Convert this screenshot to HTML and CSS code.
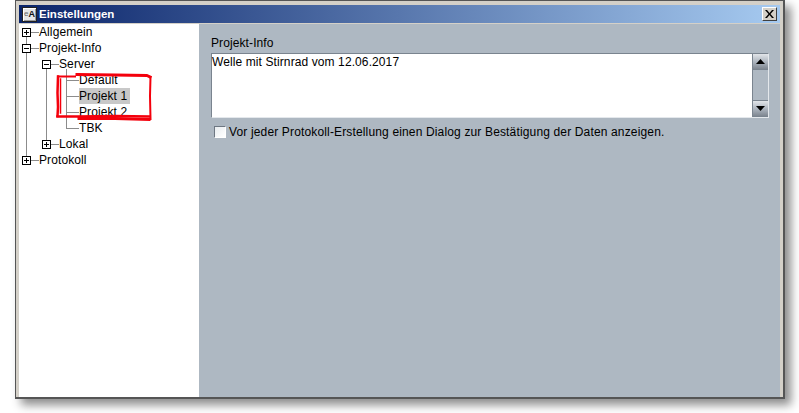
FILE: index.html
```html
<!DOCTYPE html>
<html lang="de">
<head>
<meta charset="utf-8">
<title>Einstellungen</title>
<link rel="stylesheet" href="styles.css">
</head>
<body>
<div class="window">
  <div class="titlebar">
    <div class="app-icon"><span class="icon-e">e</span><span>A</span></div>
    <div class="title">Einstellungen</div>
    <button class="close" aria-label="Schließen">
      <svg width="9" height="8" viewBox="0 0 9 8"><path d="M0 0h2l2.500 3 2.500-3h2l-3.500 4 3.500 4h-2l-2.500-3-2.500 3h-2l3.500-4z" fill="#000"/></svg>
    </button>
  </div>
  <div class="content">
    <aside class="tree">
      <svg class="tree-lines" width="180" height="160" viewBox="0 0 180 160">
        <g stroke="#8c8c8c" stroke-width="1" fill="none" shape-rendering="crispEdges">
          <path d="M7.500 13V136.500M27.500 45V120.500M47.500 45V104.500"/>
          <path d="M12 8.500H20M12 24.500H20M32 40.500H40M47 56.500H60M47 72.500H60M47 88.500H60M47 104.500H60M32 120.500H40M12 136.500H20"/>
        </g>
        <g stroke="#000" fill="#fff" shape-rendering="crispEdges">
          <rect x="3.500" y="4.500" width="8" height="8"/>
          <rect x="3.500" y="20.500" width="8" height="8"/>
          <rect x="23.500" y="36.500" width="8" height="8"/>
          <rect x="23.500" y="116.500" width="8" height="8"/>
          <rect x="3.500" y="132.500" width="8" height="8"/>
          <path d="M5 8.500H10M7.500 6V11M5 24.500H10M25 40.500H30M25 120.500H30M27.500 118V123M5 136.500H10M7.500 134V139"/>
        </g>
      </svg>
      <div class="node lvl1">Allgemein</div>
      <div class="node lvl1">Projekt-Info</div>
      <div class="node lvl2">Server</div>
      <div class="node lvl3">Default</div>
      <div class="node lvl3"><span class="selected">Projekt 1</span></div>
      <div class="node lvl3">Projekt 2</div>
      <div class="node lvl3">TBK</div>
      <div class="node lvl2">Lokal</div>
      <div class="node lvl1">Protokoll</div>
    </aside>
    <main class="panel">
      <div class="label">Projekt-Info</div>
      <div class="textbox">
        <div class="text">Welle mit Stirnrad vom 12.06.2017</div>
        <div class="scrollbar">
          <div class="arrow"><svg width="9" height="5" viewBox="0 0 9 5"><path d="M4.500 0L9 5H0z" fill="#000"/></svg></div>
          <div class="track"></div>
          <div class="arrow"><svg width="9" height="5" viewBox="0 0 9 5"><path d="M0 0H9L4.500 5z" fill="#000"/></svg></div>
        </div>
      </div>
      <div class="check-row">
        <span class="checkbox"></span>
        <span>Vor jeder Protokoll-Erstellung einen Dialog zur Bestätigung der Daten anzeigen.</span>
      </div>
    </main>
  </div>
</div>
<svg class="scribble" width="110" height="60" viewBox="0 0 110 60">
  <g fill="none" stroke="#f4000c" stroke-linecap="square" stroke-linejoin="round">
    <path stroke-width="2" d="M3 5.500H20"/>
    <path stroke-width="3" d="M22 3.500L60 4L92 4.500L95 6"/>
    <path stroke-width="2.500" d="M3 5.500L2.500 22L3 36L2.500 45"/>
    <path stroke-width="1.500" d="M5.500 8V42"/>
    <path stroke-width="2" d="M95.500 6L95 25L95.500 48"/>
    <path stroke-width="2.500" d="M2.500 45.500L22 45.500L60 45L94 45.500"/>
    <path stroke-width="3" d="M24 47.500L60 47.500L94 48.500"/>
  </g>
</svg>
</body>
</html>
```
FILE: styles.css
```css
* { box-sizing: border-box; }
html, body { margin: 0; padding: 0; background: #fff; }
body {
  position: relative;
  width: 799px;
  height: 413px;
  overflow: hidden;
  font-family: "Liberation Sans", Arial, sans-serif;
  font-size: 12px;
  letter-spacing: 0.1px;
  color: #000;
}
.window {
  margin-left: 15px;
  width: 770px;
  height: 399px;
  padding: 4px 3px 0 3px;
  display: flex;
  flex-direction: column;
  background: #d4d0c8;
  border: 1px solid #555;
  border-width: 1px 2px 2px 1px;
  box-shadow: 6px 6px 9px rgba(0, 0, 0, 0.45);
}
.titlebar {
  height: 18px;
  flex: none;
  display: flex;
  align-items: center;
  padding-left: 3px;
  padding-right: 3px;
  background: linear-gradient(90deg, #0a246a, #a6caf0);
}
.app-icon {
  width: 15px;
  height: 15px;
  flex: none;
  background: #e6e6e6;
  border: 1px solid #222;
  box-shadow: inset 1px 1px 0 #fff, inset -1px -1px 0 #999;
  display: flex;
  align-items: center;
  justify-content: center;
  font-size: 9px;
  font-weight: bold;
  letter-spacing: 0;
  line-height: 1;
  color: #111;
}
.icon-e {
  font-size: 8px;
  font-weight: normal;
  color: #666;
}
.title {
  margin-left: 2px;
  flex: 1;
  font-size: 11.500px;
  font-weight: bold;
  letter-spacing: 0;
  color: #fff;
  line-height: 18px;
}
.close {
  width: 15px;
  height: 14px;
  padding: 0;
  flex: none;
  display: flex;
  align-items: center;
  justify-content: center;
  background: #d4d0c8;
  border: 1px solid;
  border-color: #fff #404040 #404040 #fff;
}
.content {
  flex: 1;
  display: flex;
  margin-top: 1px;
  min-height: 0;
}
.tree {
  position: relative;
  width: 180px;
  flex: none;
  background: #fff;
  padding-top: 0;
}
.tree-lines {
  position: absolute;
  left: 0;
  top: 0;
}
.node {
  position: relative;
  height: 16px;
  line-height: 16px;
  white-space: nowrap;
}
.lvl1 { padding-left: 20px; }
.lvl2 { padding-left: 40px; }
.lvl3 { padding-left: 60px; }
.selected {
  display: inline-block;
  height: 16px;
  width: 51px;
  background: #c8c8c8;
}
.panel {
  flex: 1;
  background: #aeb8c2;
  padding: 11px 11px 0 12px;
}
.label {
  height: 18px;
  line-height: 16px;
}
.textbox {
  display: flex;
  height: 65px;
  background: #fff;
  border: 1px solid;
  border-color: #7a848f #e4e8ec #e4e8ec #7a848f;
}
.text {
  flex: 1;
  line-height: 16px;
  padding-left: 0;
}
.scrollbar {
  width: 16px;
  flex: none;
  display: flex;
  flex-direction: column;
  background: #aeb8c2;
  border-left: 1px solid #7a848f;
}
.arrow {
  height: 16px;
  flex: none;
  display: flex;
  align-items: center;
  justify-content: center;
  background: linear-gradient(180deg, #e2e5e9, #aab2bc 55%, #7f8791);
  border-bottom: 1px solid #7a848f;
}
.track {
  flex: 1;
  background: #aeb8c2;
  border-bottom: 1px solid #7a848f;
}
.check-row {
  display: flex;
  align-items: center;
  height: 16px;
  margin-top: 6px;
  padding-left: 3px;
  letter-spacing: 0.15px;
}
.checkbox {
  width: 12px;
  height: 12px;
  flex: none;
  margin-right: 3px;
  background: linear-gradient(135deg, #e8ecef, #fff);
  border: 1px solid #6e7782;
  border-right-color: #fff;
  border-bottom-color: #fff;
}
.scribble {
  position: absolute;
  left: 55px;
  top: 71px;
}
```
